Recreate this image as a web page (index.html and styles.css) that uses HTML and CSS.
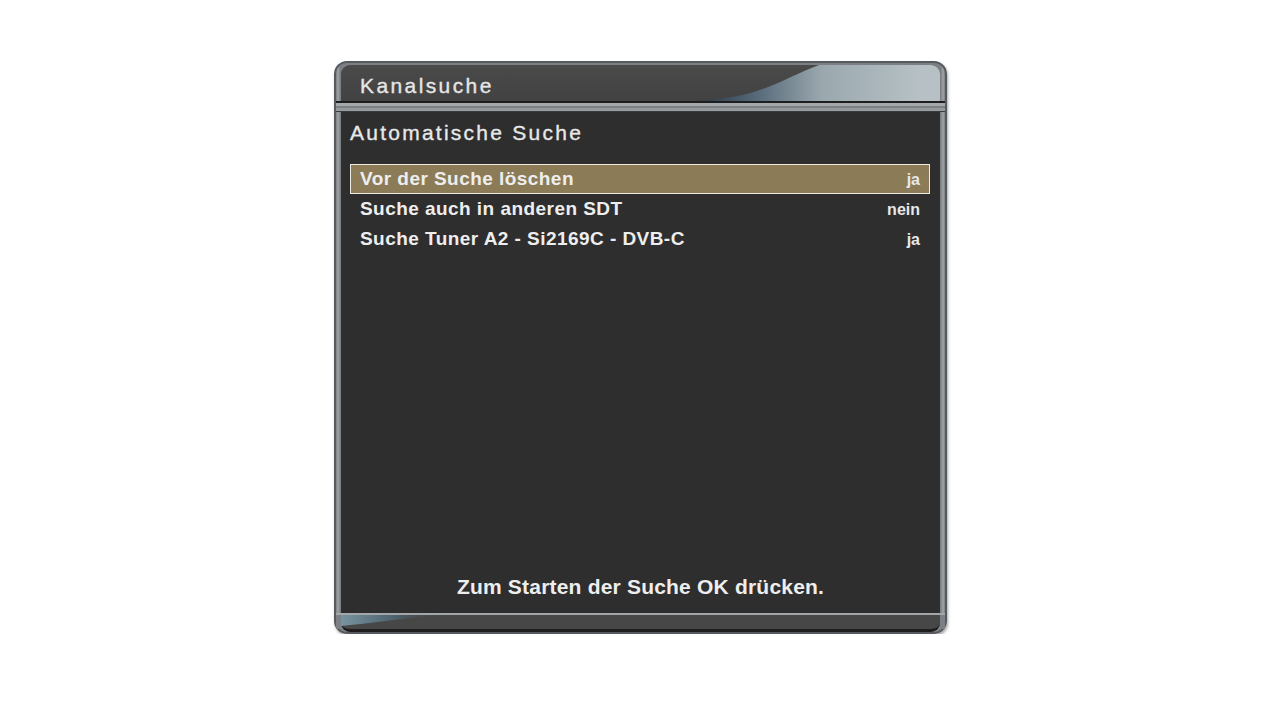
FILE: index.html
```html
<!DOCTYPE html>
<html lang="de">
<head>
<meta charset="utf-8">
<title>Kanalsuche</title>
<link rel="stylesheet" href="styles.css">
</head>
<body>
<div class="osd">
  <div class="titlebar">
    <svg class="swoosh" viewBox="0 0 599 36" preserveAspectRatio="none" aria-hidden="true">
      <defs>
        <linearGradient id="gt" gradientUnits="userSpaceOnUse" x1="360" y1="0" x2="580" y2="0">
          <stop offset="0" stop-color="#2a3b48"/>
          <stop offset="0.25" stop-color="#56697a"/>
          <stop offset="0.55" stop-color="#9aa8ae"/>
          <stop offset="1" stop-color="#b7c1c5"/>
        </linearGradient>
      </defs>
      <path d="M355,36 C420,33 440,14 478,0 L599,0 L599,36 Z" fill="url(#gt)"/>
    </svg>
    <span class="title">Kanalsuche</span>
  </div>
  <div class="sep-top"></div>
  <div class="content">
    <h2 class="subtitle">Automatische Suche</h2>
    <ul class="menu">
      <li class="item selected"><span class="label">Vor der Suche löschen</span><span class="val">ja</span></li>
      <li class="item"><span class="label">Suche auch in anderen SDT</span><span class="val">nein</span></li>
      <li class="item"><span class="label">Suche Tuner A2 - Si2169C - DVB-C</span><span class="val">ja</span></li>
    </ul>
    <p class="hint">Zum Starten der Suche OK drücken.</p>
  </div>
  <div class="bottombar">
    <svg class="swoosh-b" viewBox="0 0 120 11" preserveAspectRatio="none" aria-hidden="true">
      <defs>
        <linearGradient id="gb" x1="0" y1="0" x2="1" y2="0">
          <stop offset="0" stop-color="#7893a0"/>
          <stop offset="0.5" stop-color="#4f6570"/>
          <stop offset="1" stop-color="#474747" stop-opacity="0"/>
        </linearGradient>
      </defs>
      <path d="M0,0 L110,0 C70,3 35,8 0,11 Z" fill="url(#gb)"/>
    </svg>
  </div>
</div>
</body>
</html>
```
FILE: styles.css
```css
* { box-sizing: border-box; }

body {
  margin: 0;
  background: #ffffff;
  font-family: "Liberation Sans", Arial, sans-serif;
}

.osd {
  width: 613px;
  margin: 61px 0 0 334px;
  border: 2px solid #565a5e;
  border-radius: 13px;
  padding: 2px 5px 3px 5px;
  background: linear-gradient(90deg, #7a7e82 0, #a2a6a9 2px, #7c8084 4px, #7c8084 calc(100% - 4px), #a2a6a9 calc(100% - 2px), #7a7e82 100%);
  box-shadow: 1px 2px 3px rgba(0, 0, 0, 0.35);
  display: flex;
  flex-direction: column;
}

.titlebar {
  position: relative;
  height: 36px;
  padding: 8px 0 0 19px;
  background: linear-gradient(#4a4a4a, #424242);
  border-radius: 9px 9px 0 0;
  overflow: hidden;
}

.swoosh {
  position: absolute;
  left: 0;
  top: 0;
  width: 100%;
  height: 100%;
}

.title {
  position: relative;
  font-size: 21px;
  line-height: 26px;
  letter-spacing: 2.4px;
  color: #e6e6e6;
  -webkit-text-stroke: 0.35px #e6e6e6;
}

.sep-top {
  height: 11px;
  margin: 0 -5px;
  background: linear-gradient(#1e1e1e 0, #1e1e1e 2px, #a4a8ab 2px, #a4a8ab 5px, #7c8084 5px, #7c8084 7px, #959a9d 7px, #959a9d 10px, #3a3a3a 10px);
}

.content {
  height: 501px;
  background: #2e2e2e;
  display: flex;
  flex-direction: column;
}

.subtitle {
  margin: 0;
  padding: 8px 0 0 9px;
  font-size: 21px;
  line-height: 26px;
  font-weight: normal;
  letter-spacing: 2.25px;
  color: #e8e8e8;
  -webkit-text-stroke: 0.35px #e8e8e8;
}

.menu {
  list-style: none;
  margin: 18px 10px 0 9px;
  padding: 0;
}

.item {
  height: 30px;
  display: flex;
  justify-content: space-between;
  align-items: baseline;
  padding: 0 9px;
  border: 1px solid transparent;
  color: #eeeeee;
  font-weight: bold;
}

.item.selected {
  background: #8b7c57;
  border-color: #efebe2;
}

.label {
  font-size: 19px;
  line-height: 28px;
  letter-spacing: 0.45px;
}

.val {
  font-size: 16px;
  line-height: 28px;
  color: #e8e8e8;
}

.hint {
  margin: auto 0 0 0;
  padding-bottom: 13px;
  text-align: center;
  font-size: 21px;
  line-height: 26px;
  font-weight: bold;
  letter-spacing: 0.2px;
  color: #eeeeee;
}

.bottombar {
  position: relative;
  height: 16px;
  margin: 0 -5px;
  padding: 0 5px;
  border-top: 2px solid #a3a7aa;
  background: #7c8084;
}

.bottombar::before {
  content: "";
  display: block;
  height: 14px;
  background: #474747;
  border-bottom: 3px solid #1d1d1d;
  border-radius: 0 0 9px 9px;
}

.swoosh-b {
  position: absolute;
  left: 5px;
  top: 0;
  width: 110px;
  height: 11px;
}
```
